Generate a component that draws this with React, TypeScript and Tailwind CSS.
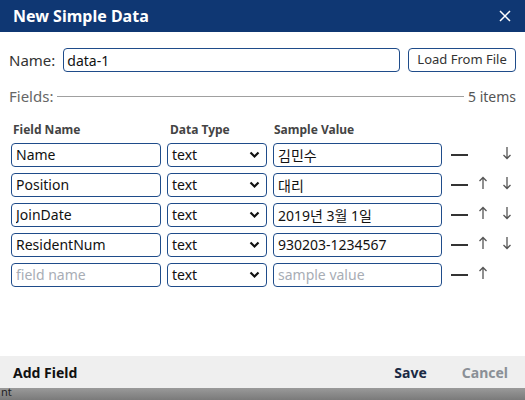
const rows = [
  { name: "Name", value: "김민수", up: false, down: true },
  { name: "Position", value: "대리", up: true, down: true },
  { name: "JoinDate", value: "2019년 3월 1일", up: true, down: true },
  { name: "ResidentNum", value: "930203-1234567", up: true, down: true },
  { name: "", value: "", up: true, down: false },
];

const inputCls =
  "h-[24px] rounded-[4px] border border-[#1f4c8a] bg-white px-[4px] text-[14px] text-[#111] outline-none placeholder:text-[#a8adb5]";

function Chevron() {
  return (
    <svg width="11" height="8" viewBox="0 0 11 8" className="absolute right-[7px] top-[8px]">
      <path d="M1.5 1.5 L5.5 5.5 L9.5 1.5" fill="none" stroke="#111" strokeWidth="2.2" />
    </svg>
  );
}

function Arrow({ up }: { up: boolean }) {
  return (
    <svg width="12" height="14" viewBox="0 0 12 14">
      {up ? (
        <path d="M6 1.5 V13 M2.5 5 L6 1.5 L9.5 5" fill="none" stroke="#555" strokeWidth="1.3" />
      ) : (
        <path d="M6 1 V12.5 M2.5 9 L6 12.5 L9.5 9" fill="none" stroke="#555" strokeWidth="1.3" />
      )}
    </svg>
  );
}

export default function App() {
  return (
    <div
      className="flex h-[400px] w-[525px] flex-col overflow-hidden bg-white"
      style={{ fontFamily: '"Noto Sans", "Noto Sans CJK KR", sans-serif' }}
    >
      <div className="flex h-[32px] shrink-0 items-center justify-between bg-[#0f3773] pl-[13px] pr-[14px]">
        <span className="text-[16px] font-bold text-white">New Simple Data</span>
        <svg width="12" height="12" viewBox="0 0 12 12">
          <path d="M1 1 L11 11 M11 1 L1 11" stroke="#fff" strokeWidth="1.5" />
        </svg>
      </div>

      <div className="flex flex-1 flex-col px-[9px]">
        <div className="mt-[16px] flex items-center">
          <span className="text-[15px] text-[#333]">Name:</span>
          <input
            readOnly
            value="data-1"
            className="ml-[8px] h-[24px] w-[337px] rounded-[4px] border border-[#1f4c8a] px-[3px] text-[14px] text-[#111] outline-none"
          />
          <button className="ml-[8px] h-[24px] w-[108px] rounded-[4px] border border-[#1f4c8a] text-[13px] text-[#333]">
            Load From File
          </button>
        </div>

        <div className="mt-[13px] flex items-center">
          <span className="text-[15px] text-[#666]">Fields:</span>
          <div className="mx-[4px] h-px flex-1 bg-[#a0a0a0]" />
          <span className="text-[14px] text-[#555]">5 items</span>
        </div>

        <div className="mt-[13px] flex text-[12px] font-bold text-[#444]">
          <span className="ml-[4px] w-[157px]">Field Name</span>
          <span className="w-[104px]">Data Type</span>
          <span>Sample Value</span>
        </div>

        <div className="mt-[4px] flex flex-col gap-[6px] pl-[2px]">
          {rows.map((r, i) => (
            <div key={i} className="flex items-center">
              <input
                readOnly
                value={r.name}
                placeholder="field name"
                className={`${inputCls} w-[150px]`}
              />
              <div className="relative ml-[6px] w-[100px]">
                <div className={`${inputCls} w-[100px] leading-[22px]`}>text</div>
                <Chevron />
              </div>
              <input
                readOnly
                value={r.value}
                placeholder="sample value"
                className={`${inputCls} ml-[6px] w-[169px]`}
              />
              <div className="ml-[9px] h-[2px] w-[17px] bg-[#333]" />
              <span className="ml-[9px] flex w-[12px] -translate-y-[2px]">{r.up ? <Arrow up /> : null}</span>
              <span className="ml-[12px] flex w-[12px] -translate-y-[2px]">{r.down ? <Arrow up={false} /> : null}</span>
            </div>
          ))}
        </div>
      </div>

      <div className="flex h-[32px] shrink-0 items-center bg-[#efefef] pl-[13px] pr-[17px] text-[14px] font-bold">
        <span className="text-[#111]">Add Field</span>
        <span className="ml-auto text-[#1a2a44]">Save</span>
        <span className="ml-[35px] text-[#8a8f96]">Cancel</span>
      </div>
      <div className="h-[12px] shrink-0 overflow-hidden bg-gradient-to-b from-[#9a9a9a] to-[#7a7a7a] pl-[1px] text-[11px] leading-[8px] text-[#222]">
        nt
      </div>
    </div>
  );
}
